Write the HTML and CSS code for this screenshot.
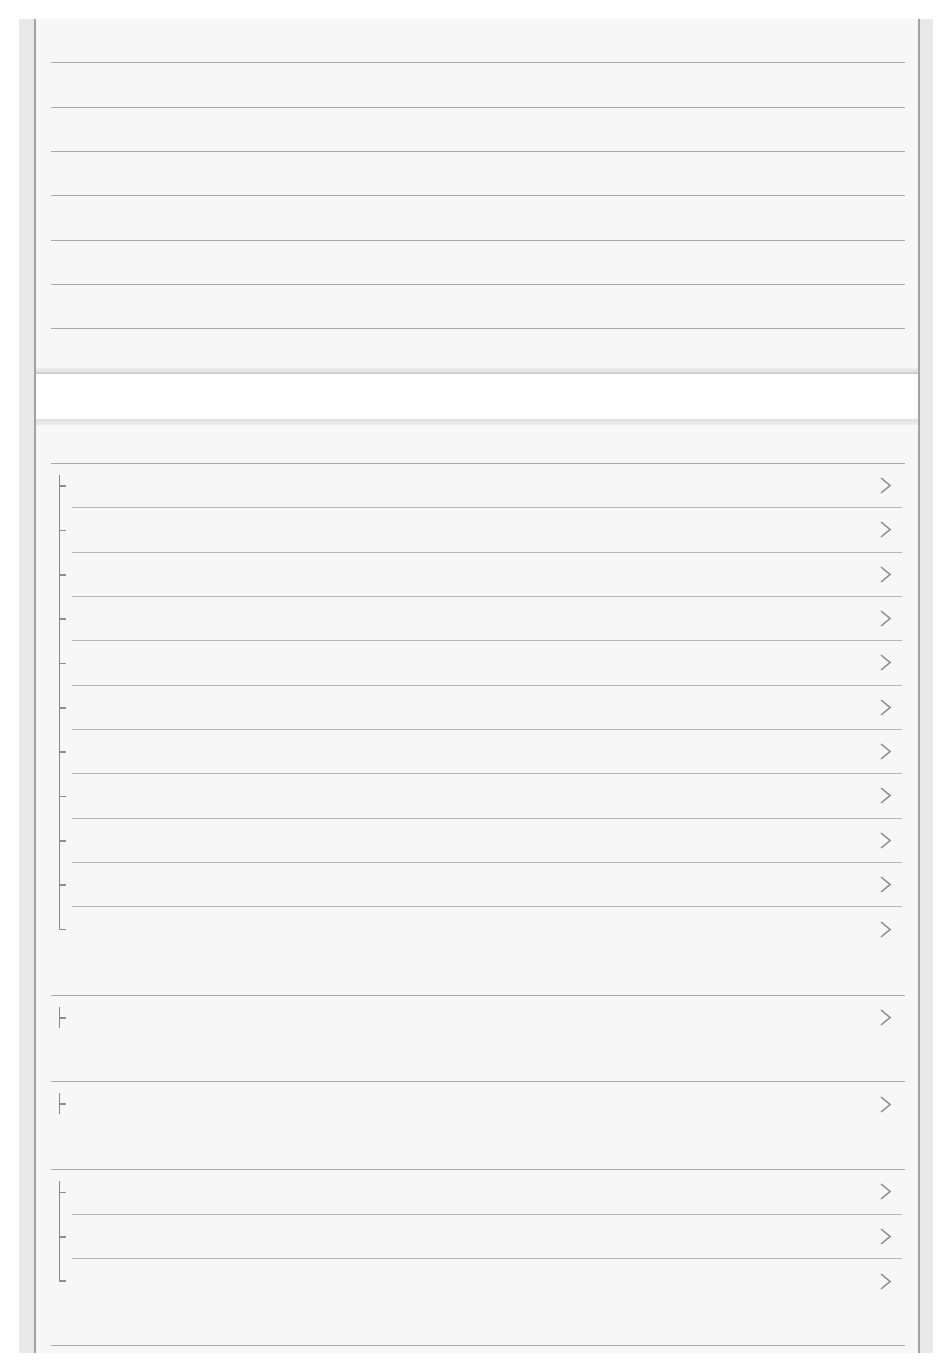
FILE: index.html
```html
<!DOCTYPE html>
<html lang="en">
<head>
<meta charset="utf-8">
<title>Menu</title>
<link rel="stylesheet" href="styles.css">
</head>
<body>
<div class="frame">
  <div class="panel">
    <ul class="toplist">
      <li class="toprow"></li>
      <li class="toprow"></li>
      <li class="toprow"></li>
      <li class="toprow"></li>
      <li class="toprow"></li>
      <li class="toprow"></li>
      <li class="toprow"></li>
    </ul>
    <div class="band"></div>
    <div class="sections">
      <section class="section">
        <ul class="tree">
          <li class="item"><svg class="chev" viewBox="0 0 11 17" width="11" height="17"><polyline points="1,1 10,8.5 1,16"/></svg></li>
          <li class="item"><svg class="chev" viewBox="0 0 11 17" width="11" height="17"><polyline points="1,1 10,8.5 1,16"/></svg></li>
          <li class="item"><svg class="chev" viewBox="0 0 11 17" width="11" height="17"><polyline points="1,1 10,8.5 1,16"/></svg></li>
          <li class="item"><svg class="chev" viewBox="0 0 11 17" width="11" height="17"><polyline points="1,1 10,8.5 1,16"/></svg></li>
          <li class="item"><svg class="chev" viewBox="0 0 11 17" width="11" height="17"><polyline points="1,1 10,8.5 1,16"/></svg></li>
          <li class="item"><svg class="chev" viewBox="0 0 11 17" width="11" height="17"><polyline points="1,1 10,8.5 1,16"/></svg></li>
          <li class="item"><svg class="chev" viewBox="0 0 11 17" width="11" height="17"><polyline points="1,1 10,8.5 1,16"/></svg></li>
          <li class="item"><svg class="chev" viewBox="0 0 11 17" width="11" height="17"><polyline points="1,1 10,8.5 1,16"/></svg></li>
          <li class="item"><svg class="chev" viewBox="0 0 11 17" width="11" height="17"><polyline points="1,1 10,8.5 1,16"/></svg></li>
          <li class="item"><svg class="chev" viewBox="0 0 11 17" width="11" height="17"><polyline points="1,1 10,8.5 1,16"/></svg></li>
          <li class="item"><svg class="chev" viewBox="0 0 11 17" width="11" height="17"><polyline points="1,1 10,8.5 1,16"/></svg></li>
        </ul>
      </section>
      <section class="section short">
        <ul class="tree">
          <li class="item"><svg class="chev" viewBox="0 0 11 17" width="11" height="17"><polyline points="1,1 10,8.5 1,16"/></svg></li>
        </ul>
      </section>
      <section class="section">
        <ul class="tree">
          <li class="item"><svg class="chev" viewBox="0 0 11 17" width="11" height="17"><polyline points="1,1 10,8.5 1,16"/></svg></li>
        </ul>
      </section>
      <section class="section last">
        <ul class="tree">
          <li class="item"><svg class="chev" viewBox="0 0 11 17" width="11" height="17"><polyline points="1,1 10,8.5 1,16"/></svg></li>
          <li class="item"><svg class="chev" viewBox="0 0 11 17" width="11" height="17"><polyline points="1,1 10,8.5 1,16"/></svg></li>
          <li class="item"><svg class="chev" viewBox="0 0 11 17" width="11" height="17"><polyline points="1,1 10,8.5 1,16"/></svg></li>
        </ul>
      </section>
      <section class="section tail"></section>
    </div>
  </div>
</div>
</body>
</html>
```

FILE: styles.css
```css
html, body {
  margin: 0;
  padding: 0;
  background: #ffffff;
  font-family: "Liberation Sans", Arial, sans-serif;
}

ul {
  list-style: none;
  margin: 0;
  padding: 0;
}

.frame {
  margin: 19px 0 0 19px;
  width: 914px;
  box-sizing: border-box;
  padding: 0 13px 0 15px;
  background: #e9e9e9;
}

.panel {
  height: 1334px;
  box-sizing: border-box;
  border-left: 2px solid #a2a2a2;
  border-right: 2px solid #a2a2a2;
  background: #f7f7f7;
  overflow: hidden;
}

.toplist {
  padding: 0 13px 38.67px 15px;
}

.toprow {
  height: 44.33px;
  box-sizing: border-box;
  border-bottom: 1px solid #ababab;
}

.band {
  height: 57px;
  background: linear-gradient(to bottom,
    #ededed 0px, #e0e0e0 4px, #cdcdcd 5px, #c4c4c4 6px,
    #ffffff 6.5px, #ffffff 51px,
    #e0e0e0 51px, #e6e6e6 54px, #ececec 57px);
}

.sections {
  padding: 38px 13px 0 15px;
}

.section {
  border-top: 1px solid #ababab;
  padding-bottom: 43px;
}

.section.short {
  padding-bottom: 41px;
}

.section.last {
  padding-bottom: 42px;
}

.section.tail {
  padding-bottom: 0;
  height: 20px;
}

.tree {
  margin: 0 3px 0 21px;
}

.item {
  position: relative;
  height: 44.33px;
  box-sizing: border-box;
  border-bottom: 1px solid #b8b8b8;
  display: flex;
  align-items: center;
  justify-content: flex-end;
  padding-right: 11px;
}

.item:last-child {
  border-bottom: none;
}

.item::before {
  content: "";
  position: absolute;
  left: -13px;
  top: 0;
  bottom: -1px;
  width: 1.4px;
  background: #8a8a8a;
}

.item::after {
  content: "";
  position: absolute;
  left: -13px;
  top: 21.5px;
  width: 7px;
  height: 1.5px;
  background: #8e8e8e;
}

.item:first-child::before {
  top: 11px;
}

.item:last-child::before {
  bottom: auto;
  height: 23px;
}

.item:only-child::before {
  top: 11px;
  height: 21px;
}

.chev {
  display: block;
  fill: none;
  stroke: #8a8a8a;
  stroke-width: 1.6;
}
```
